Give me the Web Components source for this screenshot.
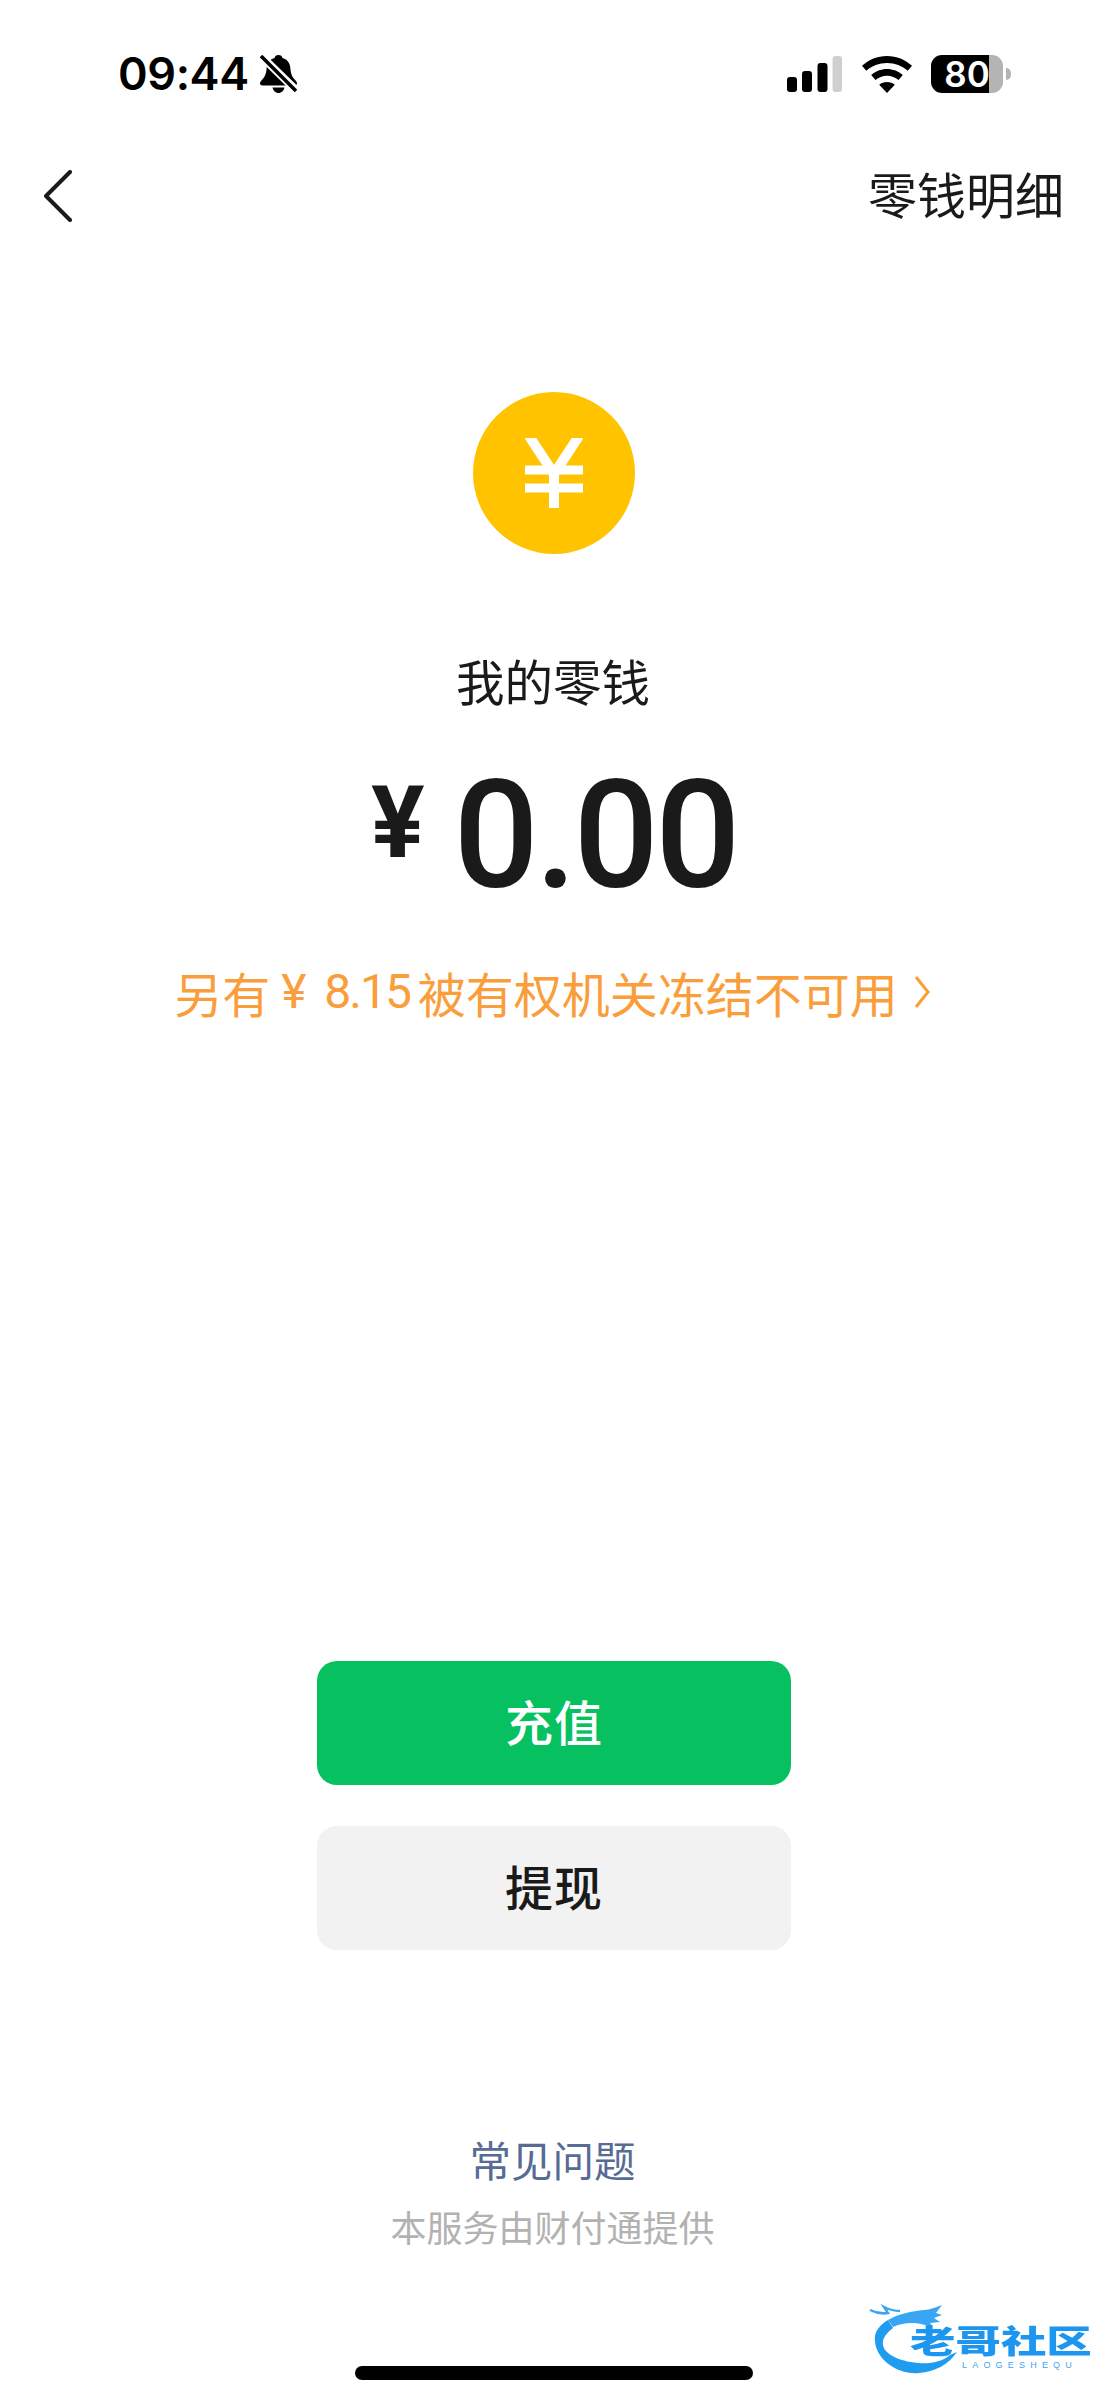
<!DOCTYPE html>
<html lang="zh-CN">
<head>
<meta charset="utf-8">
<title>我的零钱</title>
<style>
  html, body { margin: 0; background: #fff; }
  body { font-family: "Noto Sans CJK SC", "Noto Sans", sans-serif; color: #1a1a1a; }
</style>
</head>
<body>
<wallet-page></wallet-page>

<script>
// 顶部状态栏:时间、静音铃铛、信号、wifi、电量
class StatusBar extends HTMLElement {
  constructor() {
    super();
    this.attachShadow({ mode: 'open' });
    this.shadowRoot.innerHTML = `
      <style>
        :host { display: flex; align-items: center; justify-content: space-between; height: 148px; box-sizing: border-box; padding: 0 97px 0 118px; flex: none; color: #000; }
        .left, .right { display: flex; align-items: center; }
        .time { font: 600 45px/48px Inter, "Liberation Sans", sans-serif; letter-spacing: -.4px; }
        .bell { margin-left: 11px; }
        .wifi { margin: 0 19px 0 20px; }
        .battery { display: flex; align-items: center; }
        .cell { width: 72px; height: 38px; border-radius: 11px; background: linear-gradient(90deg, #000 58px, #b4b4b4 58px); color: #fff; font: 600 35px/38px Inter, "Liberation Sans", sans-serif; text-align: center; }
        .nub { width: 5px; height: 12px; margin-left: 3px; border-radius: 0 6px 6px 0; background: #b4b4b4; }
      </style>
      <div class="left">
        <span class="time">09:44</span>
        <svg class="bell" width="37" height="38" viewBox="0 0 37 38">
          <path d="M18.500 0c2.200 0 3.600 1.300 4 3 5.300 1.500 7.600 5.600 7.900 10.500.3 5.200 1.600 8.400 5 11.700 1.200 1.200 1.600 2.400 1.600 3.300 0 1.300-1 2-2.500 2H2.500C1 30.500 0 29.800 0 28.500c0-.9.400-2.100 1.600-3.300 3.400-3.300 4.700-6.500 5-11.700C6.900 8.600 9.200 4.500 14.500 3c.4-1.700 1.800-3 4-3z"/>
          <path d="M12.500 32.500h12c-.6 3-3 5.500-6 5.500s-5.400-2.500-6-5.500z"/>
          <path d="M0 0 37 36" stroke="#fff" stroke-width="8"/>
          <path d="M1 1 36 36" stroke="#000" stroke-width="3.500"/>
        </svg>
      </div>
      <div class="right">
        <svg width="55" height="36" viewBox="0 0 55 36">
          <rect x="0" y="21" width="10" height="15" rx="3"/>
          <rect x="15" y="15" width="10" height="21" rx="3"/>
          <rect x="30.500" y="7" width="10" height="29" rx="3"/>
          <rect x="45.500" y="0" width="9.500" height="36" rx="3" fill="#cfcfcf"/>
        </svg>
        <svg class="wifi" width="50" height="37" viewBox="0 0 50 37">
          <path d="M25 0c9.600 0 18.300 3.700 25 9.800l-4.300 5C40.200 9.900 33 7 25 7S9.800 9.900 4.300 14.800L0 9.800C6.700 3.700 15.400 0 25 0z"/>
          <path d="M25 13c6 0 11.600 2.300 15.800 6l-4.300 5c-3.100-2.700-7.100-4.300-11.500-4.300S16.600 21.300 13.500 24l-4.300-5C13.400 15.300 19 13 25 13z"/>
          <path d="M25 26c3 0 5.700 1 7.800 2.700L25 37l-7.800-8.300C19.300 27 22 26 25 26z"/>
        </svg>
        <div class="battery"><div class="cell">80</div><div class="nub"></div></div>
      </div>`;
  }
}

// 导航栏:返回箭头 + 右侧"零钱明细"
class NavBar extends HTMLElement {
  constructor() {
    super();
    this.attachShadow({ mode: 'open' });
    this.shadowRoot.innerHTML = `
      <style>
        :host { display: flex; align-items: center; justify-content: space-between; height: 96px; padding: 0 44px 0 44px; flex: none; }
        .title { font-size: 49px; line-height: 64px; margin-bottom: 6px; color: #1a1a1a; }
      </style>
      <svg width="28" height="52" viewBox="0 0 28 52" fill="none" stroke="#1a1a1a" stroke-width="4" stroke-linecap="round" stroke-linejoin="round"><path d="M26 2 2 26l24 24"/></svg>
      <span class="title"><slot></slot></span>`;
  }
}

// 金币 + 余额 + 冻结提示
class BalancePanel extends HTMLElement {
  constructor() {
    super();
    this.attachShadow({ mode: 'open' });
    this.shadowRoot.innerHTML = `
      <style>
        :host { display: flex; flex-direction: column; align-items: center; padding-top: 148px; flex: none; }
        .coin { width: 162px; height: 162px; border-radius: 50%; background: #ffc300; display: flex; align-items: center; justify-content: center; }
        .label { margin-top: 92px; padding-right: 2px; font-size: 48.500px; line-height: 68px; color: #1a1a1a; }
        .amount { margin-top: 42px; display: flex; align-items: center; height: 160px; color: #1a1a1a; font-family: Roboto, "Liberation Sans", sans-serif; font-weight: 500; }
        .unit { font-size: 100px; font-weight: 700; line-height: 160px; margin-right: 29px; position: relative; top: -13px; }
        .num { font-size: 150px; line-height: 160px; letter-spacing: -3.500px; }
        .note { margin-top: 42px; padding-right: 4px; display: flex; align-items: center; font-size: 48px; line-height: 68px; color: #fa9d3b; }
        .note svg { margin-left: 16px; }
        .latin { font-family: Roboto, "Liberation Sans", sans-serif; margin: 0 8px 0 11px; letter-spacing: -2px; word-spacing: 10px; }
      </style>
      <div class="coin">
        <svg width="58" height="70" viewBox="0 0 58 70" fill="none" stroke="#fff" stroke-width="10">
          <path d="M4 -2 29 36 54 -2M29 34V70"/>
          <path d="M0 32H58M0 50H58" stroke-width="9"/>
        </svg>
      </div>
      <div class="label">我的零钱</div>
      <div class="amount"><span class="unit">¥</span><span class="num">0.00</span></div>
      <div class="note">另有<span class="latin">¥ 8.15</span>被有权机关冻结不可用
        <svg width="16" height="34" viewBox="0 0 16 34" fill="none" stroke="#fa9d3b" stroke-width="3"><path d="M2 2 14 17 2 32"/></svg>
      </div>`;
  }
}

// 操作按钮,variant="primary" 为绿色
class ActionButton extends HTMLElement {
  constructor() {
    super();
    this.attachShadow({ mode: 'open' });
    this.shadowRoot.innerHTML = `
      <style>
        :host { display: flex; align-items: center; justify-content: center; box-sizing: border-box; width: 474px; height: 124px; padding-bottom: 6px; border-radius: 20px; background: #f2f2f2; color: #1a1a1a; font-size: 48px; font-weight: 500; letter-spacing: 1px; }
        :host([variant="primary"]) { background: #07c160; color: #fff; }
      </style>
      <slot></slot>`;
  }
}

// 底部链接和服务说明
class PageFooter extends HTMLElement {
  constructor() {
    super();
    this.attachShadow({ mode: 'open' });
    this.shadowRoot.innerHTML = `
      <style>
        :host { display: flex; flex-direction: column; align-items: center; flex: none; padding-right: 3px; }
        .faq { font-size: 41.500px; line-height: 60px; margin-top: 1px; color: #576b95; }
        .by { margin-top: 11px; font-size: 36px; line-height: 52px; color: #b2b2b2; }
      </style>
      <div class="faq">常见问题</div>
      <div class="by">本服务由财付通提供</div>`;
  }
}

// 右下角水印,盖在页面上
class WaterMark extends HTMLElement {
  constructor() {
    super();
    this.attachShadow({ mode: 'open' });
    this.shadowRoot.innerHTML = `
      <style>
        :host { position: absolute; left: 869px; top: 2303px; width: 224px; height: 76px; display: block; }
        svg { position: absolute; left: 0; top: 0; filter: blur(.6px); }
        .name { position: absolute; left: 41px; top: 18px; font-size: 32px; line-height: 36px; font-weight: 900; color: #1c96ee; white-space: nowrap; transform: scaleX(1.42); transform-origin: left center; filter: blur(.5px); }
        .sub { position: absolute; left: 93px; top: 57px; font: 400 9px/10px "Liberation Sans", sans-serif; letter-spacing: 5.200px; color: #3fa6ef; white-space: nowrap; }
      </style>
      <svg width="90" height="76" viewBox="0 0 90 76" fill="none" overflow="visible">
        <path d="M19 17C9 23 5 30 6 38c1 18 22 34 44 32 16-1 30-9 38-21l-7 3c-8 7-20 9-32 8C28 58 12 50 14 38c1-5 5-9 10-13z" fill="#1f9bf0"/>
        <path d="M19 17c10-6 24-9 36-10 6 0 12-3 18-5l-6 8 6 2-8 3 6 4-10 1 3 4-12-3c-8-2-20-1-28 3z" fill="#38a6f2"/>
        <path d="M1 7c6 3 12 4 18 3l-4-6c6 3 10 4 16 4" stroke="#38a6f2" stroke-width="2.500"/>
      </svg>
      <span class="name">老哥社区</span>
      <span class="sub">LAOGESHEQU</span>`;
  }
}

// 整页
class WalletPage extends HTMLElement {
  constructor() {
    super();
    this.attachShadow({ mode: 'open' });
    this.shadowRoot.innerHTML = `
      <style>
        :host { display: flex; flex-direction: column; position: relative; width: 1108px; height: 2400px; overflow: hidden; background: #fff; }
        .actions { margin-top: auto; display: flex; flex-direction: column; align-items: center; gap: 41px; }
        page-footer { margin-top: 178px; }
        .home { width: 398px; height: 14px; border-radius: 7px; background: #000; margin: 114px auto 20px; flex: none; }
      </style>
      <status-bar></status-bar>
      <nav-bar>零钱明细</nav-bar>
      <balance-panel></balance-panel>
      <div class="actions">
        <action-button variant="primary">充值</action-button>
        <action-button>提现</action-button>
      </div>
      <page-footer></page-footer>
      <div class="home"></div>
      <water-mark></water-mark>`;
  }
}

customElements.define('status-bar', StatusBar);
customElements.define('nav-bar', NavBar);
customElements.define('balance-panel', BalancePanel);
customElements.define('action-button', ActionButton);
customElements.define('page-footer', PageFooter);
customElements.define('water-mark', WaterMark);
customElements.define('wallet-page', WalletPage);
</script>
</body>
</html>
